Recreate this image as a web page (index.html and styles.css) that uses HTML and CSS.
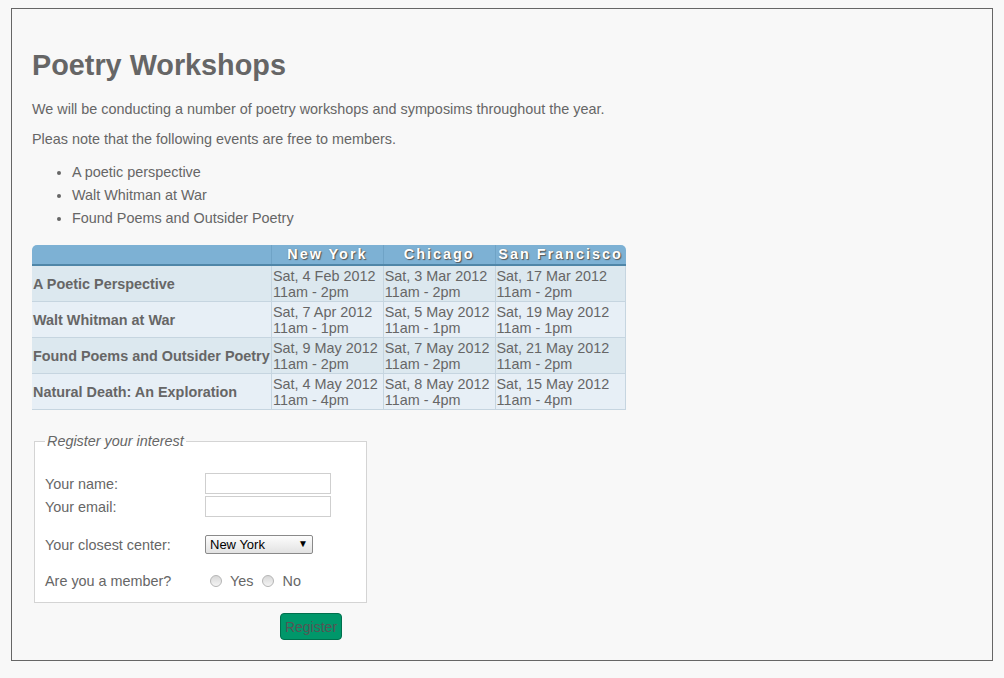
FILE: index.html
```html
<!DOCTYPE html>
<html>
<head>
<meta charset="utf-8">
<title>Poetry Workshops</title>
<link rel="stylesheet" href="styles.css">
</head>
<body>
<div class="page">
  <h1 class="title">Poetry Workshops</h1>
  <p class="text">We will be conducting a number of poetry workshops and symposims throughout the year.</p>
  <p class="text">Pleas note that the following events are free to members.</p>
  <ul class="list">
    <li>A poetic perspective</li>
    <li>Walt Whitman at War</li>
    <li>Found Poems and Outsider Poetry</li>
  </ul>
  <table class="events">
    <thead>
      <tr>
        <th class="corner-l"></th>
        <th>New York</th>
        <th>Chicago</th>
        <th class="corner-r">San Francisco</th>
      </tr>
    </thead>
    <tbody>
      <tr class="odd">
        <th class="name">A Poetic Perspective</th>
        <td>Sat, 4 Feb 2012<br>11am - 2pm</td>
        <td>Sat, 3 Mar 2012<br>11am - 2pm</td>
        <td>Sat, 17 Mar 2012<br>11am - 2pm</td>
      </tr>
      <tr class="even">
        <th class="name">Walt Whitman at War</th>
        <td>Sat, 7 Apr 2012<br>11am - 1pm</td>
        <td>Sat, 5 May 2012<br>11am - 1pm</td>
        <td>Sat, 19 May 2012<br>11am - 1pm</td>
      </tr>
      <tr class="odd">
        <th class="name">Found Poems and Outsider Poetry</th>
        <td>Sat, 9 May 2012<br>11am - 2pm</td>
        <td>Sat, 7 May 2012<br>11am - 2pm</td>
        <td>Sat, 21 May 2012<br>11am - 2pm</td>
      </tr>
      <tr class="even">
        <th class="name">Natural Death: An Exploration</th>
        <td>Sat, 4 May 2012<br>11am - 4pm</td>
        <td>Sat, 8 May 2012<br>11am - 4pm</td>
        <td>Sat, 15 May 2012<br>11am - 4pm</td>
      </tr>
    </tbody>
  </table>
  <form class="form">
    <fieldset class="fs">
      <legend class="legend">Register your interest</legend>
      <div class="row first">
        <label class="lbl" for="name">Your name:</label>
        <input class="field" type="text" id="name">
      </div>
      <div class="row">
        <label class="lbl" for="email">Your email:</label>
        <input class="field" type="text" id="email">
      </div>
      <div class="row gap1">
        <label class="lbl" for="center">Your closest center:</label>
        <span class="sel-wrap">
          <select class="sel" id="center">
            <option>New York</option>
            <option>Chicago</option>
            <option>San Francisco</option>
          </select>
        </span>
      </div>
      <div class="row gap2">
        <span class="lbl">Are you a member?</span>
        <span class="radios">
          <input class="radio" type="radio" name="member" id="yes"><label for="yes" class="rlbl">Yes</label>
          <input class="radio" type="radio" name="member" id="no"><label for="no" class="rlbl">No</label>
        </span>
      </div>
    </fieldset>
    <button class="btn" type="button">Register</button>
  </form>
</div>
</body>
</html>
```

FILE: styles.css
```css
html, body {
  background: #f8f8f8;
}
body {
  margin: 0;
  padding: 8px 11px 18px;
  font-family: "Liberation Sans", Arial, sans-serif;
  font-size: 14.4px;
  color: #666;
}
.page {
  border: 1px solid #666;
  padding: 20px 20px 20px;
}
.title {
  font-size: 28.8px;
  font-weight: bold;
  margin: 19px 0 19px;
  line-height: 34px;
  color: #666;
}
.text {
  margin: 14px 0;
  line-height: 16px;
}
.list {
  margin: 14px 0;
  padding-left: 40px;
}
.list li {
  line-height: 23px;
}
.events {
  margin-top: 15px;
  border-collapse: collapse;
  width: 594px;
  font-size: 14.4px;
}
.events thead th {
  background: #7db1d4;
  color: #fff;
  font-weight: bold;
  letter-spacing: 2px;
  text-align: center;
  height: 19px;
  padding: 0;
  line-height: 19px;
  border-bottom: 2px solid #4f86a8;
  border-left: 1px solid #6fa3c6;
  text-shadow: 1px 1px 1px #555, 0 0 1px #777;
}
.events thead th.corner-l {
  border-left: none;
  border-top-left-radius: 5px;
  width: 239px;
}
.events thead th.corner-r {
  border-top-right-radius: 5px;
  width: 130px;
}
.events tbody td,
.events tbody th {
  padding: 2px 1px 1px;
  line-height: 16px;
  height: 32px;
  border-bottom: 1px solid #c6d5e0;
  border-left: 1px solid #c6d5e0;
  vertical-align: middle;
  text-align: left;
  white-space: nowrap;
}
.events tbody td:last-child {
  border-right: 1px solid #c6d5e0;
}
.events tbody th.name {
  border-left: none;
  font-weight: bold;
  padding-left: 1px;
}
.events tr.odd td,
.events tr.odd th {
  background: #dce8ef;
}
.events tr.even td,
.events tr.even th {
  background: #e7eff6;
}
.form {
  margin: 23px 0 0;
}
.fs {
  margin: 0 2px;
  width: 333px;
  box-sizing: border-box;
  padding: 0 10px 10px;
  border: 1px solid #d4d4d4;
  background: #fff;
}
.legend {
  font-style: italic;
  padding: 0 2px;
  line-height: 16px;
  color: #666;
}
.row {
  display: flex;
  align-items: center;
  height: 23px;
}
.row.first {
  margin-top: 23px;
}
.row.gap1 {
  margin-top: 15px;
}
.row.gap2 {
  margin-top: 13px;
}
.lbl {
  width: 160px;
  flex: none;
}
.field {
  width: 126px;
  height: 21px;
  box-sizing: border-box;
  border: 1px solid #cfcfcf;
  background: #fff;
  margin: 0;
  padding: 1px 3px;
  font: 13px "Liberation Sans", Arial, sans-serif;
}
.sel-wrap {
  position: relative;
  display: inline-block;
}
.sel-wrap::after {
  content: "\25BC";
  position: absolute;
  right: 5px;
  top: 3px;
  font-size: 10px;
  color: #000;
  pointer-events: none;
}
.sel {
  appearance: none;
  -webkit-appearance: none;
  width: 108px;
  height: 19px;
  box-sizing: border-box;
  margin: 0;
  padding: 0 4px;
  border: 1px solid #8a8a8a;
  border-radius: 2px;
  background: linear-gradient(#fdfdfd, #e2e2e2);
  font: 13px "Liberation Sans", Arial, sans-serif;
  color: #000;
}
.radios {
  display: flex;
  align-items: center;
}
.radio {
  appearance: none;
  -webkit-appearance: none;
  width: 12px;
  height: 12px;
  margin: 0 5px 0 5px;
  border: 1px solid #b5b5b5;
  border-radius: 50%;
  background: linear-gradient(#d8d8d8, #f4f4f4);
  box-sizing: border-box;
}
.rlbl {
  margin-right: 4px;
  margin-left: 3px;
}
.btn {
  display: block;
  margin: 10px 0 0 248px;
  width: 62px;
  height: 27px;
  box-sizing: border-box;
  background: #00976a;
  border: 1px solid #00704d;
  border-radius: 4px;
  color: #555;
  font: 14px "Liberation Sans", Arial, sans-serif;
  padding: 0;
}
```
